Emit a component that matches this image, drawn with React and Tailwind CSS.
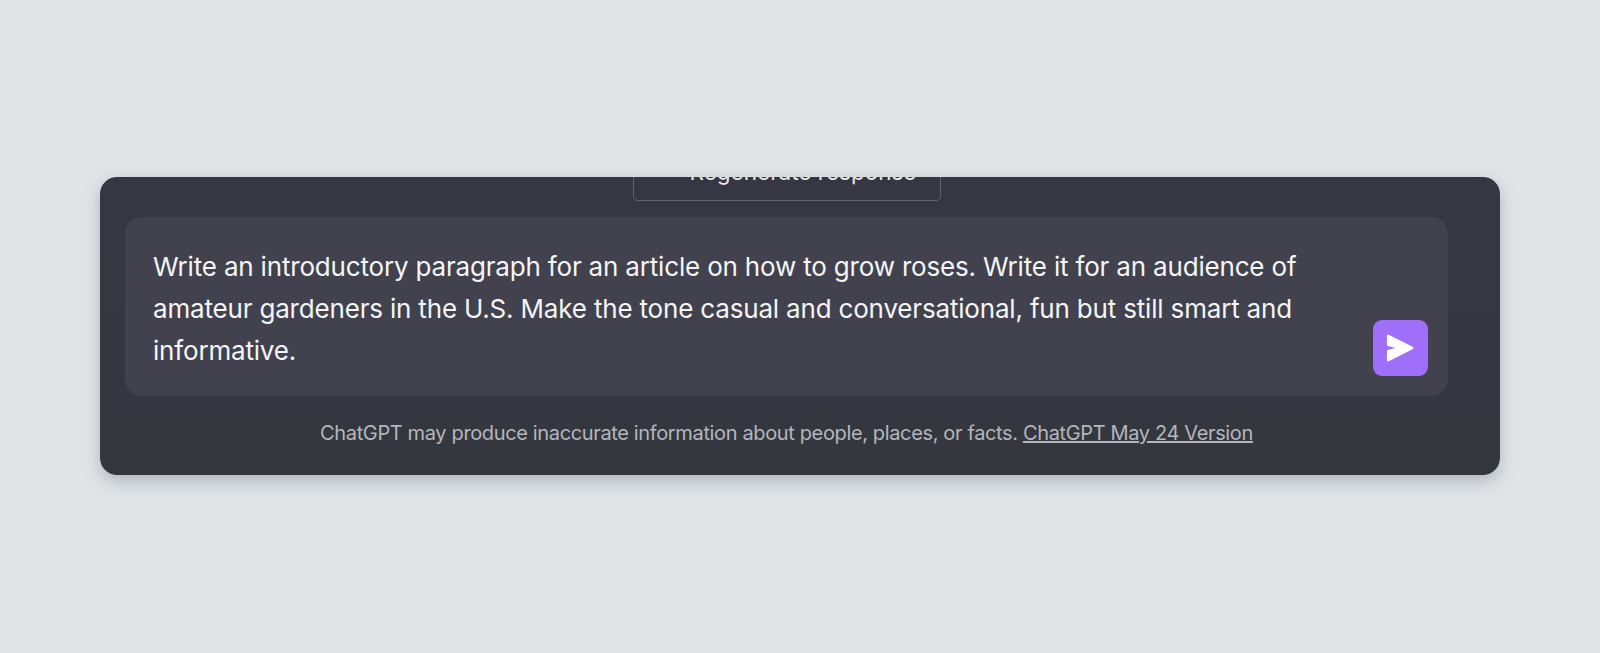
export default function App() {
  return (
    <div className="min-h-[653px] bg-[#e0e4e7] pt-[177px] pl-[100px] font-['Inter','Liberation_Sans',sans-serif]">
      <div className="w-[1400px] h-[298px] rounded-[17px] overflow-hidden bg-gradient-to-b from-[#363743] to-[#34373e] shadow-[0_6px_16px_rgba(90,100,110,0.35)] pl-[25px] pr-[52px]">
        <div className="flex flex-col items-center">
          <div className="-mt-[20px] w-[308px] h-[44px] rounded-[5px] border border-[#62646f] pl-[33px] pb-[14px] flex items-center justify-center text-[22.5px] leading-none text-[#e8e9ec] whitespace-nowrap">
            Regenerate response
          </div>
          <div className="mt-[16px] w-[1323px] h-[179px] rounded-[17px] bg-[#41424e] pl-[28px] pr-[20px] flex items-end">
            <p className="flex-1 self-start pt-[29px] text-[26px] leading-[41.8px] tracking-[-0.18px] text-[#f4f5f6] whitespace-nowrap">
              Write an introductory paragraph for an article on how to grow roses. Write it for an audience of<br />
              amateur gardeners in the U.S. Make the tone casual and conversational, fun but still smart and<br />
              informative.
            </p>
            <button className="mb-[20px] w-[55px] h-[56px] shrink-0 rounded-[9px] bg-[#a06ffa] flex items-center justify-center">
              <svg width="28" height="28" viewBox="0 0 28 28" className="-ml-[1px]">
                <path d="M2.2 1.8 L26 14 L2.2 26.2 L2.2 17.2 L14 14 L2.2 10.8 Z" fill="#ffffff" stroke="#ffffff" strokeWidth="2.6" strokeLinejoin="round" />
              </svg>
            </button>
          </div>
          <p className="mt-[24px] text-[20px] leading-[26px] tracking-[-0.36px] text-[#b4b6bd] whitespace-nowrap">
            ChatGPT may produce inaccurate information about people, places, or facts. <a className="underline">ChatGPT May 24 Version</a>
          </p>
        </div>
      </div>
    </div>
  );
}
